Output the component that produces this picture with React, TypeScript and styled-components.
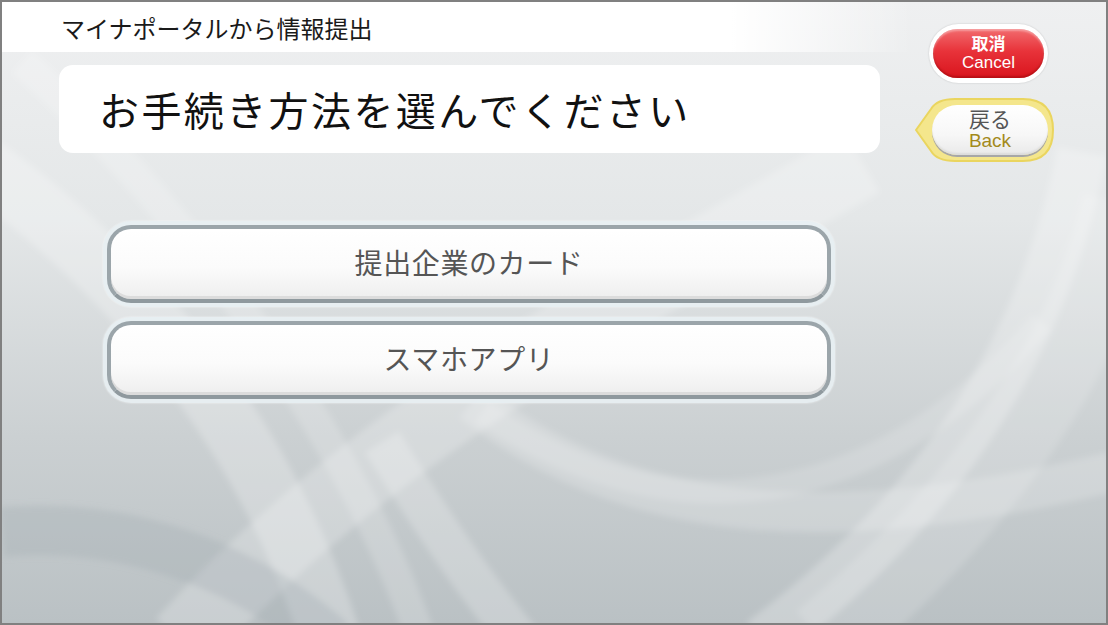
import styled, { createGlobalStyle } from 'styled-components'

const GlobalStyle = createGlobalStyle`
  html, body {
    margin: 0;
    padding: 0;
    background: #ffffff;
  }
  * {
    box-sizing: border-box;
  }
`

const FONT = `"Noto Sans CJK JP", "Noto Sans", sans-serif`
const LATIN_FONT = `"Liberation Sans", "Noto Sans CJK JP", sans-serif`

const Screen = styled.div`
  position: relative;
  width: 1108px;
  height: 625px;
  border: 2px solid #808080;
  overflow: hidden;
  font-family: ${FONT};
  background: linear-gradient(180deg, #eff0f1 0%, #e4e7e8 35%, #cbd0d2 70%, #bac1c4 100%);
  display: grid;
  grid-template-columns: 911px 1fr;
`

const Waves = styled.svg`
  position: absolute;
  inset: 0;
  width: 100%;
  height: 100%;
  pointer-events: none;
`

const LeftColumn = styled.div`
  position: relative;
  display: flex;
  flex-direction: column;
`

const HeaderBar = styled.div`
  height: 50px;
  background: linear-gradient(90deg, #ffffff 0%, #ffffff 80%, rgba(255, 255, 255, 0) 100%);
  padding-left: 59px;
  display: flex;
  align-items: center;
  font-size: 24px;
  color: #1a1a1a;
`

const TitleBox = styled.div`
  margin: 13px 0 0 57px;
  width: 821px;
  height: 88px;
  border-radius: 14px;
  background: #ffffff;
  display: flex;
  align-items: center;
  padding-left: 40px;
  font-size: 40px;
  letter-spacing: 2.4px;
  color: #111111;
`

const ChoiceList = styled.div`
  margin: 68px 0 0 101px;
  display: flex;
  flex-direction: column;
  gap: 10px;
`

const ChoiceHalo = styled.div`
  width: 732px;
  height: 86px;
  padding: 4px;
  border-radius: 28px;
  background: rgba(232, 240, 243, 0.9);
  box-shadow: 0 0 2px rgba(255, 255, 255, 0.8);
`

const ChoiceButton = styled.button`
  width: 100%;
  height: 100%;
  border: 4px solid #9ba5aa;
  border-bottom-color: #8f999e;
  border-radius: 24px;
  background: linear-gradient(180deg, #ffffff 0%, #fbfbfb 55%, #eeeeee 100%);
  box-shadow: inset 0 -3px 0 #dcdcdc, inset 0 2px 0 #ffffff;
  font-family: ${FONT};
  font-size: 28px;
  color: #555555;
  letter-spacing: 0.6px;
  padding: 0 0 4px;
  cursor: pointer;
`

const RightColumn = styled.div`
  position: relative;
  display: flex;
  flex-direction: column;
  align-items: flex-start;
  padding: 22px 0 0 2px;
`

const CancelRing = styled.div`
  margin-left: 14px;
  width: 119px;
  height: 59px;
  padding: 5px 4px;
  border-radius: 30px;
  background: #ffffff;
  box-shadow: 0 0 2px rgba(0, 0, 0, 0.18);
`

const CancelButton = styled.button`
  width: 100%;
  height: 100%;
  border: none;
  border-radius: 25px;
  background: linear-gradient(180deg, #f26b6e 0%, #e8333a 45%, #d9141d 100%);
  box-shadow: inset 0 -2px 2px rgba(120, 0, 0, 0.35), inset 0 2px 2px rgba(255, 255, 255, 0.35);
  color: #ffffff;
  font-family: ${LATIN_FONT};
  display: flex;
  flex-direction: column;
  align-items: center;
  justify-content: center;
  gap: 1px;
  padding: 0 0 1px;
  cursor: pointer;
`

const Label = styled.span<{ $size: number; $color?: string; $weight?: number }>`
  display: block;
  font-size: ${(p) => p.$size}px;
  color: ${(p) => p.$color ?? 'inherit'};
  font-weight: ${(p) => p.$weight ?? 400};
  line-height: 1;
`

const BackWrap = styled.div`
  position: relative;
  margin-top: 12px;
  width: 140px;
  height: 70px;
  display: flex;
  align-items: center;
  justify-content: flex-end;
  padding-right: 7px;
`

const BackShape = styled.svg`
  position: absolute;
  inset: 0;
`

const BackButton = styled.button`
  position: relative;
  width: 116px;
  height: 50px;
  border: none;
  border-radius: 25px;
  background: linear-gradient(180deg, #ffffff 0%, #f7f7f7 60%, #e9e9e9 100%);
  box-shadow: 0 2px 0 #a7a7a7, inset 0 -2px 2px rgba(0, 0, 0, 0.06);
  font-family: ${LATIN_FONT};
  display: flex;
  flex-direction: column;
  align-items: center;
  justify-content: center;
  gap: 1px;
  padding: 0 0 2px;
  cursor: pointer;
`

const App = () => {
  return (
    <>
      <GlobalStyle />
      <Screen>
        <Waves viewBox="0 0 1104 621" preserveAspectRatio="none">
          <defs>
            <filter id="soft" x="-10%" y="-10%" width="120%" height="120%">
              <feGaussianBlur stdDeviation="3" />
            </filter>
          </defs>
          <g filter="url(#soft)" fill="none">
            <path d="M-40 150 C 120 260, 260 420, 330 640" stroke="rgba(255,255,255,0.24)" strokeWidth="60" />
            <path d="M20 60 C 200 220, 360 460, 420 640" stroke="rgba(255,255,255,0.18)" strokeWidth="30" />
            <path d="M180 640 C 380 420, 620 300, 860 160" stroke="rgba(255,255,255,0.22)" strokeWidth="70" />
            <path d="M470 400 C 620 520, 820 540, 1110 470" stroke="rgba(255,255,255,0.18)" strokeWidth="40" />
            <path d="M480 410 C 700 560, 900 480, 1040 320" stroke="rgba(255,255,255,0.15)" strokeWidth="24" />
            <path d="M760 640 C 920 520, 1040 360, 1080 150" stroke="rgba(255,255,255,0.24)" strokeWidth="50" />
            <path d="M820 640 C 990 500, 1090 340, 1120 200" stroke="rgba(255,255,255,0.15)" strokeWidth="80" />
            <path d="M0 530 C 120 520, 240 560, 330 640" stroke="rgba(160,170,174,0.3)" strokeWidth="50" />
            <path d="M380 440 C 430 520, 470 580, 520 640" stroke="rgba(255,255,255,0.22)" strokeWidth="40" />
          </g>
        </Waves>
        <LeftColumn>
          <HeaderBar>マイナポータルから情報提出</HeaderBar>
          <TitleBox>お手続き方法を選んでください</TitleBox>
          <ChoiceList>
            <ChoiceHalo>
              <ChoiceButton>提出企業のカード</ChoiceButton>
            </ChoiceHalo>
            <ChoiceHalo>
              <ChoiceButton>スマホアプリ</ChoiceButton>
            </ChoiceHalo>
          </ChoiceList>
        </LeftColumn>
        <RightColumn>
          <CancelRing>
            <CancelButton>
              <Label $size={17} $weight={700}>取消</Label>
              <Label $size={17}>Cancel</Label>
            </CancelButton>
          </CancelRing>
          <BackWrap>
            <BackShape viewBox="0 0 140 70" width="140" height="70">
              <path
                d="M1 35 L 16 14 Q 22 4 40 4 L 108 4 Q 138 4 138 35 Q 138 66 108 66 L 40 66 Q 22 66 16 56 Z"
                fill="#f4e68c"
                stroke="#ead55f"
                strokeWidth="2"
              />
            </BackShape>
            <BackButton>
              <Label $size={21} $color="#555555">戻る</Label>
              <Label $size={19} $color="#a38a1c">Back</Label>
            </BackButton>
          </BackWrap>
        </RightColumn>
      </Screen>
    </>
  )
}

export default App
